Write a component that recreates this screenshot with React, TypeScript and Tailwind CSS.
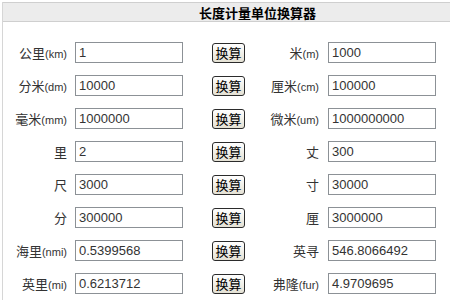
import React from "react";

const rows: [string, string, string, string, string, string][] = [
  ["公里", "(km)", "1", "米", "(m)", "1000"],
  ["分米", "(dm)", "10000", "厘米", "(cm)", "100000"],
  ["毫米", "(mm)", "1000000", "微米", "(um)", "1000000000"],
  ["里", "", "2", "丈", "", "300"],
  ["尺", "", "3000", "寸", "", "30000"],
  ["分", "", "300000", "厘", "", "3000000"],
  ["海里", "(nmi)", "0.5399568", "英寻", "", "546.8066492"],
  ["英里", "(mi)", "0.6213712", "弗隆", "(fur)", "4.9709695"],
];

const Label = ({ zh, unit, w }: { zh: string; unit: string; w: string }) => (
  <div className={`${w} text-right text-[13px] text-[#333] whitespace-nowrap`}>
    {zh}
    {unit && <span className="text-[11px] font-['Liberation_Sans',sans-serif]">{unit}</span>}
  </div>
);

const Field = ({ value }: { value: string }) => (
  <div className="w-[108px] h-[21px] border border-[#8c9196] bg-white flex items-center pl-[3px] text-[13px] text-[#333] font-['Liberation_Sans',sans-serif]">
    {value}
  </div>
);

export default function App() {
  return (
    <div className="w-[450px] h-[300px] overflow-hidden bg-white font-['Noto_Sans_CJK_SC',sans-serif]">
      <div className="ml-[2px] mt-[2px] w-[510px] h-[320px] border-l border-[#d6d6d6]">
        <div className="h-[20px] bg-[#ececec] border-y border-[#cfcfcf] flex items-center justify-center text-[13px] font-bold text-black leading-none">
          长度计量单位换算器
        </div>
        <div className="pt-[14px]">
          {rows.map((r, i) => (
            <div key={i} className="flex items-center h-[33px]">
              <Label zh={r[0]} unit={r[1]} w="w-[64px]" />
              <div className="ml-[8px]">
                <Field value={r[2]} />
              </div>
              <button className="ml-[29px] w-[33px] h-[20px] border border-[#2b2b2b] rounded-[3px] bg-gradient-to-b from-white to-[#e4e1d4] text-[13px] text-black leading-none flex items-center justify-center">
                换算
              </button>
              <Label zh={r[3]} unit={r[4]} w="w-[74px]" />
              <div className="ml-[9px]">
                <Field value={r[5]} />
              </div>
            </div>
          ))}
        </div>
      </div>
    </div>
  );
}
